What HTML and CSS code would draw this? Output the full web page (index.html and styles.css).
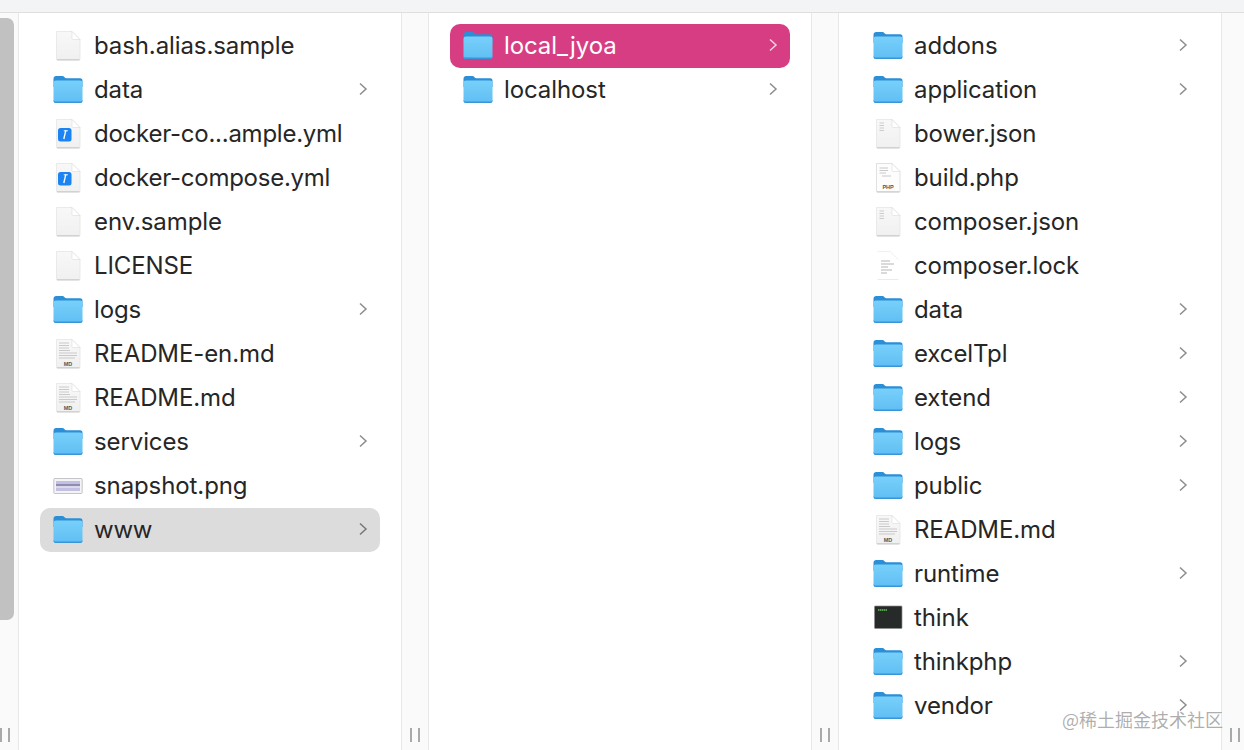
FILE: index.html
```html
<!DOCTYPE html>
<html lang="en">
<head>
<meta charset="utf-8">
<title>Finder columns</title>
<link rel="stylesheet" href="styles.css">
</head>
<body>
<svg class="defs" aria-hidden="true">
  <defs>
    <linearGradient id="fb" x1="0" y1="0" x2="0" y2="1"><stop offset="0" stop-color="#78d0fa"/><stop offset="1" stop-color="#60bef4"/></linearGradient>
    <linearGradient id="fg" x1="0" y1="0" x2="0" y2="1"><stop offset="0" stop-color="#f8f8f8"/><stop offset="1" stop-color="#f0f0f0"/></linearGradient>
    <symbol id="folder" viewBox="0 0 30 30">
      <path d="M.5 4C.5 2 1.500 1 3.300 1H9.500C11 1 11.500 3.200 13 3.200H27C28.800 3.200 29.500 4.200 29.500 6V12H.5Z" fill="#2b8ed6"/>
      <path d="M.5 8C.5 6.300 1.500 5.500 3 5.500H27C28.700 5.500 29.500 6.300 29.500 8V25.500C29.500 27.200 28.700 28 27 28H3C1.500 28 .5 27.200 .5 25.500Z" fill="url(#fb)"/>
      <path d="M.5 24.500V25.500C.5 27.200 1.500 28 3 28H27C28.700 28 29.500 27.200 29.500 25.500V24.500C29.500 26 28.500 26.600 27 26.600H3C1.500 26.600 .5 26 .5 24.500Z" fill="#3a94d8"/>
    </symbol>
    <symbol id="file" viewBox="0 0 30 30">
      <path d="M3.500 .5H19L27 8.500V28C27 28.800 26.500 29.200 25.700 29.200H4.800C4 29.200 3.500 28.800 3.500 28Z" fill="url(#fg)" stroke="#e2e2e2" stroke-width=".7"/>
      <path d="M4 28.800H26.500" stroke="#bdbdbd" stroke-width=".8"/>
      <path d="M19 .5V7.500C19 8.100 19.400 8.500 20 8.500H27Z" fill="#fff" stroke="#dcdcdc" stroke-width=".6"/>
    </symbol>
    <symbol id="yml" viewBox="0 0 30 30">
      <use href="#file"/>
      <rect x="5" y="9" width="13.500" height="13.500" rx="2.500" fill="#1b84f2"/>
      <path d="M12.800 11.500 10.800 20" stroke="#fff" stroke-width="1.300"/>
      <path d="M10.800 11.800H14.800" stroke="#fff" stroke-width="1"/>
    </symbol>
    <symbol id="doc" viewBox="0 0 30 30">
      <use href="#file"/>
      <path d="M6 4H16M6 6.500H16M6 9H16M6 11.500H17M6 14H24M6 16.500H24M6 19H22" stroke="#c9c9c9" stroke-width="1.200"/>
      <text class="tag" x="15" y="26.500" text-anchor="middle">MD</text>
    </symbol>
    <symbol id="php" viewBox="0 0 30 30">
      <path d="M3.500 .5H19L27 8.500V28C27 28.800 26.500 29.200 25.700 29.200H4.800C4 29.200 3.500 28.800 3.500 28Z" fill="#fdfdfd" stroke="#d4d4d4" stroke-width=".7"/>
      <path d="M4 28.800H26.500" stroke="#bdbdbd" stroke-width=".8"/>
      <path d="M19 .5V7.500C19 8.100 19.400 8.500 20 8.500H27Z" fill="#fff" stroke="#dcdcdc" stroke-width=".6"/>
      <path d="M6.500 5H15M6.500 7.500H15M6.500 10H13M9 13H18" stroke="#c8c8c8" stroke-width="1"/>
      <text class="tag" x="15" y="25.500" text-anchor="middle">PHP</text>
    </symbol>
    <symbol id="json" viewBox="0 0 30 30">
      <use href="#file"/>
      <path d="M6.500 4H11M6.500 6.500H11M6.500 9H11M6.500 11.500H11" stroke="#cccccc" stroke-width="1.100"/>
    </symbol>
    <symbol id="text" viewBox="0 0 30 30">
      <path d="M4.500 .5H17L25.500 8.500V28.500H4.500" fill="#fff"/>
      <path d="M4.500 28.500H25.500" stroke="#e6e6e6" stroke-width=".8"/>
      <path d="M4.500 .5H17L25.500 8.500" fill="none" stroke="#ececec" stroke-width=".8"/>
      <path d="M8 10H17M8 13H21M8 16H15M8 19H19M8 22H14" stroke="#b5b5b5" stroke-width="1"/>
    </symbol>
    <symbol id="image" viewBox="0 0 30 30">
      <rect x=".8" y="7.500" width="28.400" height="15" rx="1" fill="#f4f4f6" stroke="#b8b8bc" stroke-width=".8"/>
      <rect x="3" y="10" width="24" height="10" fill="#c3c0e4"/>
      <path d="M3 14H27" stroke="#6b6b8a" stroke-width="1.200"/>
      <path d="M3 16H27" stroke="#f1f1f6" stroke-width="1"/>
    </symbol>
    <symbol id="exec" viewBox="0 0 30 30">
      <rect x="1.500" y="3" width="27.500" height="22.500" rx=".8" fill="#262a29" stroke="#8d8d8d" stroke-width=".7"/>
      <path d="M5 7H14" stroke="#62c554" stroke-width="1.300" stroke-dasharray="1.500 .5"/>
    </symbol>
    <symbol id="chev" viewBox="0 0 10 14">
      <path d="M2 1.500 8 7 2 12.500" fill="none" stroke="currentColor" stroke-width="1.500"/>
    </symbol>
  </defs>
</svg>

<div class="titlebar"></div>
<main class="browser">
  <div class="gutter first"><div class="thumb"></div><div class="handle"><i></i><i></i></div></div>
  <section class="column">
    <div class="row"><svg class="icon"><use href="#file"/></svg><span class="name">bash.alias.sample</span></div>
    <div class="row"><svg class="icon"><use href="#folder"/></svg><span class="name">data</span><svg class="chev"><use href="#chev"/></svg></div>
    <div class="row"><svg class="icon"><use href="#yml"/></svg><span class="name tight">docker-co...ample.yml</span></div>
    <div class="row"><svg class="icon"><use href="#yml"/></svg><span class="name tight">docker-compose.yml</span></div>
    <div class="row"><svg class="icon"><use href="#file"/></svg><span class="name">env.sample</span></div>
    <div class="row"><svg class="icon"><use href="#file"/></svg><span class="name">LICENSE</span></div>
    <div class="row"><svg class="icon"><use href="#folder"/></svg><span class="name">logs</span><svg class="chev"><use href="#chev"/></svg></div>
    <div class="row"><svg class="icon"><use href="#doc"/></svg><span class="name">README-en.md</span></div>
    <div class="row"><svg class="icon"><use href="#doc"/></svg><span class="name">README.md</span></div>
    <div class="row"><svg class="icon"><use href="#folder"/></svg><span class="name">services</span><svg class="chev"><use href="#chev"/></svg></div>
    <div class="row"><svg class="icon"><use href="#image"/></svg><span class="name">snapshot.png</span></div>
    <div class="row inactive"><svg class="icon"><use href="#folder"/></svg><span class="name tight">www</span><svg class="chev"><use href="#chev"/></svg></div>
  </section>
  <div class="gutter"><div class="handle"><i></i><i></i></div></div>
  <section class="column">
    <div class="row active"><svg class="icon"><use href="#folder"/></svg><span class="name">local_jyoa</span><svg class="chev"><use href="#chev"/></svg></div>
    <div class="row"><svg class="icon"><use href="#folder"/></svg><span class="name">localhost</span><svg class="chev"><use href="#chev"/></svg></div>
  </section>
  <div class="gutter"><div class="handle"><i></i><i></i></div></div>
  <section class="column">
    <div class="row"><svg class="icon"><use href="#folder"/></svg><span class="name">addons</span><svg class="chev"><use href="#chev"/></svg></div>
    <div class="row"><svg class="icon"><use href="#folder"/></svg><span class="name">application</span><svg class="chev"><use href="#chev"/></svg></div>
    <div class="row"><svg class="icon"><use href="#json"/></svg><span class="name">bower.json</span></div>
    <div class="row"><svg class="icon"><use href="#php"/></svg><span class="name">build.php</span></div>
    <div class="row"><svg class="icon"><use href="#json"/></svg><span class="name">composer.json</span></div>
    <div class="row"><svg class="icon"><use href="#text"/></svg><span class="name">composer.lock</span></div>
    <div class="row"><svg class="icon"><use href="#folder"/></svg><span class="name">data</span><svg class="chev"><use href="#chev"/></svg></div>
    <div class="row"><svg class="icon"><use href="#folder"/></svg><span class="name">excelTpl</span><svg class="chev"><use href="#chev"/></svg></div>
    <div class="row"><svg class="icon"><use href="#folder"/></svg><span class="name">extend</span><svg class="chev"><use href="#chev"/></svg></div>
    <div class="row"><svg class="icon"><use href="#folder"/></svg><span class="name">logs</span><svg class="chev"><use href="#chev"/></svg></div>
    <div class="row"><svg class="icon"><use href="#folder"/></svg><span class="name">public</span><svg class="chev"><use href="#chev"/></svg></div>
    <div class="row"><svg class="icon"><use href="#doc"/></svg><span class="name">README.md</span></div>
    <div class="row"><svg class="icon"><use href="#folder"/></svg><span class="name">runtime</span><svg class="chev"><use href="#chev"/></svg></div>
    <div class="row"><svg class="icon"><use href="#exec"/></svg><span class="name">think</span></div>
    <div class="row"><svg class="icon"><use href="#folder"/></svg><span class="name">thinkphp</span><svg class="chev"><use href="#chev"/></svg></div>
    <div class="row"><svg class="icon"><use href="#folder"/></svg><span class="name">vendor</span><svg class="chev"><use href="#chev"/></svg></div>
  </section>
  <div class="gutter"><div class="handle"><i></i><i></i></div></div>
</main>
<div class="watermark">@稀土掘金技术社区</div>
</body>
</html>
```
FILE: styles.css
```css
* { box-sizing: border-box; }
html, body { margin: 0; height: 100%; overflow: hidden; background: #fff; }
body {
  display: flex;
  flex-direction: column;
  width: 1244px;
  height: 750px;
  font-family: "Inter", "Liberation Sans", sans-serif;
  color: #262626;
  position: relative;
}
.defs { position: absolute; width: 0; height: 0; }
.tag { font: 700 5.5px "Liberation Sans", sans-serif; fill: #555; }
.titlebar { height: 13px; flex: none; background: #f3f4f5; border-bottom: 1px solid #dfdfdf; }
.browser { flex: 1; display: flex; min-height: 0; }
.gutter {
  flex: none;
  width: 28px;
  position: relative;
  display: flex;
  align-items: flex-end;
  justify-content: center;
  padding-bottom: 8px;
  background: #fafafa;
  border-left: 1px solid #e8e8e8;
  border-right: 1px solid #e8e8e8;
}
.gutter.first { margin-left: -9px; border-left: 0; }
.gutter.first .handle { margin-left: 1px; }
.handle { display: flex; gap: 6px; }
.handle i { display: block; width: 2px; height: 14px; background: #a9a9a9; }
.thumb {
  position: absolute;
  left: 0;
  top: 5px;
  width: 23px;
  height: 602px;
  background: #c1c1c1;
  border-radius: 7px;
}
.column {
  flex: none;
  width: 382px;
  padding: 11px 21px 0;
  background: #fff;
}
.row {
  display: flex;
  align-items: center;
  width: 340px;
  height: 44px;
  padding-left: 13px;
  border-radius: 10px;
  font-size: 24px;
  letter-spacing: -.1px;
  white-space: nowrap;
}
.icon { flex: none; width: 30px; height: 30px; margin-right: 11px; }
.name { flex: 1; margin-bottom: 2px; }
.name.tight { letter-spacing: -.25px; }
.chev { flex: none; width: 10px; height: 14px; margin: 0 12px 2px 0; color: #8c8c8c; }
.row.inactive { background: #dcdcdc; }
.row.inactive .chev { color: #777; }
.row.active { background: #d73d83; color: #fff; }
.row.active .chev { color: #f4d3e2; }
.watermark {
  position: absolute;
  left: 1062px;
  top: 706px;
  font: 18px "Noto Sans CJK SC", "Liberation Sans", sans-serif;
  color: rgba(120, 120, 120, .6);
  white-space: nowrap;
}
```
